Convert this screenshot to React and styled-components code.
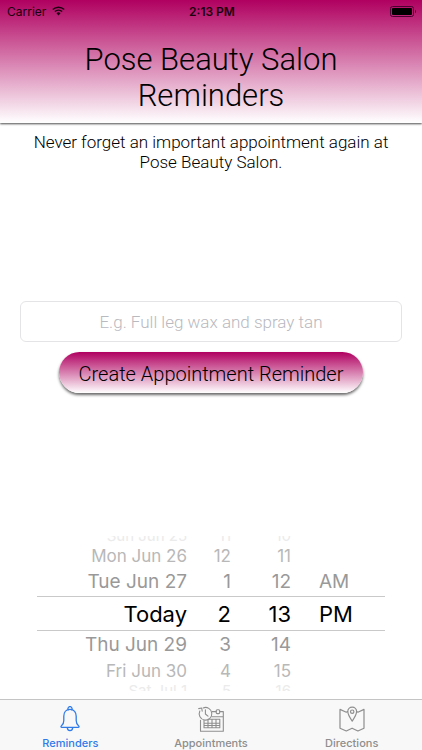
import React, { useState } from "react";
import styled, { createGlobalStyle, css } from "styled-components";

const GlobalStyle = createGlobalStyle`
  * {
    box-sizing: border-box;
  }

  body {
    margin: 0;
    background: #fff;
    color: #000;
    font-family: Roboto, "Liberation Sans", sans-serif;
    font-weight: 300;
  }
`;

const systemFont = css`
  font-family: Inter, "Liberation Sans", sans-serif;
`;

const Screen = styled.div`
  display: flex;
  flex-direction: column;
  min-height: 100vh;
`;

const Header = styled.header`
  background: linear-gradient(#b00060, #fff);
  box-shadow: 0 1px 2px rgba(0, 0, 0, 0.7);
  padding-bottom: 9px;
`;

const StatusBar = styled.div`
  ${systemFont};
  display: grid;
  grid-template-columns: 1fr auto 1fr;
  align-items: center;
  height: 22px;
  padding: 0 5px 0 7px;
  font-size: 12px;
  font-weight: 400;
  color: #1c0010;
`;

const Carrier = styled.span`
  display: flex;
  align-items: center;
  gap: 6px;
`;

const Clock = styled.time`
  font-weight: 600;
`;

const Battery = styled.svg`
  justify-self: end;
`;

const Title = styled.h1`
  margin: 0;
  padding: 20px 60px 0;
  font-size: 31px;
  line-height: 36px;
  font-weight: 300;
  text-align: center;
`;

const Intro = styled.p`
  margin: 0;
  padding: 9px 30px 0;
  font-size: 17px;
  line-height: 20px;
  text-align: center;
`;

const Form = styled.form`
  display: flex;
  flex-direction: column;
  align-items: center;
  gap: 10px;
  margin: auto 0;
  padding: 0 20px 14px;
`;

const Input = styled.input`
  width: 100%;
  height: 41px;
  border: 1px solid #e4e4e6;
  border-radius: 6px;
  background: #fff;
  font: inherit;
  font-size: 17px;
  text-align: center;
  outline: none;

  &::placeholder {
    color: #b9b9c0;
    opacity: 1;
  }
`;

const CreateButton = styled.button`
  height: 41px;
  padding: 2px 20px 0;
  border: 0;
  border-radius: 21px;
  background: linear-gradient(#b00060, #fff);
  box-shadow: 0 2px 3px rgba(0, 0, 0, 0.6);
  color: #000;
  font: inherit;
  font-size: 20px;
`;

const Picker = styled.div`
  ${systemFont};
  margin: 0 37px 8px;
`;

// Rows get shorter and fainter away from the selected one, like a wheel.
const depths = [
  { height: 35, size: 22, line: 24, color: "#000" },
  { height: 28, size: 19, line: 24, color: "#999" },
  { height: 24, size: 17, line: 20, color: "#b8b8b8" },
  { height: 8, size: 15, line: 16, color: "#ebebeb" }
];

const PickerRow = styled.div`
  display: grid;
  grid-template-columns: 150fr 44fr 60fr 94fr;
  align-items: ${props => props.$edge || "center"};
  height: ${props => depths[props.$depth].height}px;
  overflow: hidden;
  font-size: ${props => depths[props.$depth].size}px;
  line-height: ${props => depths[props.$depth].line}px;
  font-weight: 400;
  color: ${props => depths[props.$depth].color};
  ${props =>
    props.$edge &&
    css`
      grid-template-rows: 100%;
    `};
  ${props =>
    props.$depth === 0 &&
    css`
      border-top: 1px solid #c9c9c9;
      border-bottom: 1px solid #c9c9c9;
    `};
`;

const PickerCell = styled.span`
  text-align: ${props => props.$align || "right"};
  padding-left: ${props => props.$indent || 0}px;
  white-space: nowrap;
`;

const TabBar = styled.nav`
  ${systemFont};
  display: flex;
  height: 51px;
  border-top: 1px solid #c4c4c4;
  background: #f8f8f8;
`;

const Tab = styled.a`
  flex: 1;
  display: flex;
  flex-direction: column;
  align-items: center;
  gap: 2px;
  padding-top: 6px;
  color: ${props => (props.$active ? "#2f7bea" : "#8e8e8e")};
  font-size: 11px;
  line-height: 14px;
  font-weight: 500;
  text-decoration: none;

  svg {
    fill: none;
    stroke: currentColor;
    stroke-linecap: round;
    stroke-linejoin: round;
  }
`;

const WifiIcon = () => (
  <svg width="13" height="10" viewBox="0 0 13 10" fill="none" stroke="currentColor" aria-hidden="true">
    <path d="M0.8 3.5a8.2 8.2 0 0 1 11.4 0" strokeWidth="1.5" />
    <path d="M2.9 5.6a5.2 5.2 0 0 1 7.2 0" strokeWidth="1.5" />
    <path d="M4.5 7.3a2.9 2.9 0 0 1 4 0L6.5 9.4z" fill="currentColor" stroke="none" />
  </svg>
);

const BatteryIcon = () => (
  <Battery width="27" height="11" viewBox="0 0 27 11" role="img" aria-label="Battery full">
    <rect x="0.5" y="0.5" width="23" height="10" rx="2" fill="none" stroke="#4a0030" />
    <rect x="2" y="2" width="20" height="7" rx="1" fill="#000" />
    <path d="M25 3.8c1.4.5 1.4 2.9 0 3.4z" fill="#4a0030" />
  </Battery>
);

const BellIcon = () => (
  <svg width="26" height="28" viewBox="0 0 26 28" strokeWidth="1.3" aria-hidden="true">
    <path d="M11.3 3.7a2 2 0 1 1 3.4 0" />
    <path d="M13 3.4c-4.1 0-6.2 2.9-6.2 6.8v4.3c0 2.6-.7 4-2.3 5.2-1 .8-.6 1.7.4 1.7h16.2c1 0 1.4-.9.4-1.7-1.6-1.2-2.3-2.6-2.3-5.2v-4.3c0-3.9-2.1-6.8-6.2-6.8z" />
    <path d="M10.3 21.6a2.7 3 0 0 0 5.4 0" />
  </svg>
);

const CalendarIcon = () => (
  <svg width="28" height="28" viewBox="0 0 28 28" strokeWidth="1.1" aria-hidden="true">
    <path d="M2.8 5.1a6.3 6.3 0 1 0 3.4-3.2" />
    <path d="M1.7 2.6l3-.6.5 3.1" />
    <path d="M8.4 3.8v4.2l2.6 2.2" />
    <path d="M3.5 14.3v10.9h22.8V5.6h-3.6M19.2 5.6h-4M14.8 10.8h11.5" />
    <rect x="19.2" y="3.8" width="3.5" height="3.8" rx="1" />
    <path d="M7 17.2h15.8M7 14.2v7.5h15.8v-8.5H11M7 19.5h15.8M11 13.2v8.5M15 13.2v8.5M19 13.2v8.5" />
  </svg>
);

const MapIcon = () => (
  <svg width="28" height="28" viewBox="0 0 28 28" strokeWidth="1.2" aria-hidden="true">
    <path d="M9.5 5.6L8.3 6.2 2 3.4v18.8l6.3 2.8 5.8-2.8 5.8 2.8 6.1-2.8V3.4l-6.1 2.8-.8-.4" />
    <path d="M14.2 15.1C12 11.9 9.8 8.8 9.8 5.6a4.4 4.4 0 0 1 8.8 0c0 3.2-2.2 6.3-4.4 9.5z" />
    <circle cx="14.2" cy="5.7" r="1.7" />
  </svg>
);

const rows = [
  { depth: 3, edge: "end", cells: ["Sun Jun 25", "11", "10", ""] },
  { depth: 2, cells: ["Mon Jun 26", "12", "11", ""] },
  { depth: 1, cells: ["Tue Jun 27", "1", "12", "AM"] },
  { depth: 0, cells: ["Today", "2", "13", "PM"] },
  { depth: 1, cells: ["Thu Jun 29", "3", "14", ""] },
  { depth: 2, cells: ["Fri Jun 30", "4", "15", ""] },
  { depth: 3, edge: "start", cells: ["Sat Jul 1", "5", "16", ""] }
];

const tabs = [
  { id: "reminders", label: "Reminders", Icon: BellIcon },
  { id: "appointments", label: "Appointments", Icon: CalendarIcon },
  { id: "directions", label: "Directions", Icon: MapIcon }
];

export default function App() {
  const [active, setActive] = useState("reminders");
  const [reminder, setReminder] = useState("");

  return (
    <Screen>
      <GlobalStyle />
      <Header>
        <StatusBar>
          <Carrier>
            Carrier
            <WifiIcon />
          </Carrier>
          <Clock>2:13 PM</Clock>
          <BatteryIcon />
        </StatusBar>
        <Title>Pose Beauty Salon Reminders</Title>
      </Header>

      <Intro>Never forget an important appointment again at Pose Beauty Salon.</Intro>

      <Form onSubmit={e => e.preventDefault()}>
        <Input
          type="text"
          aria-label="Appointment"
          placeholder="E.g. Full leg wax and spray tan"
          value={reminder}
          onChange={e => setReminder(e.target.value)}
        />
        <CreateButton type="submit">Create Appointment Reminder</CreateButton>
      </Form>

      <Picker role="group" aria-label="Date and time">
        {rows.map(({ depth, edge, cells: [day, hour, minute, period] }) => (
          <PickerRow key={day} $depth={depth} $edge={edge}>
            <PickerCell>{day}</PickerCell>
            <PickerCell>{hour}</PickerCell>
            <PickerCell>{minute}</PickerCell>
            <PickerCell $align="left" $indent={28}>
              {period}
            </PickerCell>
          </PickerRow>
        ))}
      </Picker>

      <TabBar>
        {tabs.map(({ id, label, Icon }) => (
          <Tab key={id} href={`#${id}`} $active={id === active} onClick={() => setActive(id)}>
            <Icon />
            {label}
          </Tab>
        ))}
      </TabBar>
    </Screen>
  );
}
